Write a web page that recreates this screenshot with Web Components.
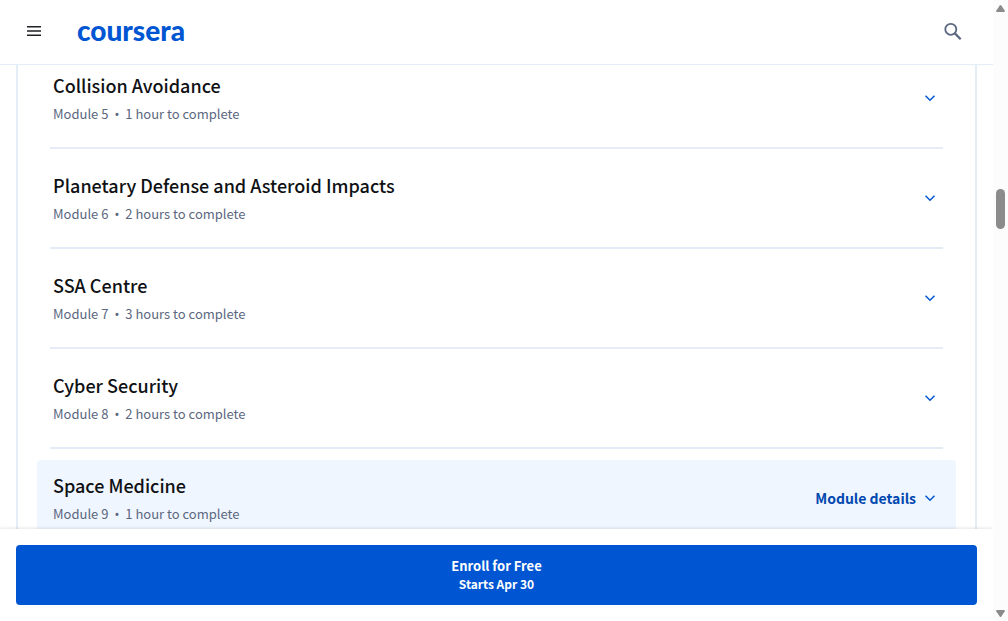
<!DOCTYPE html>
<html lang="en">
<head>
<meta charset="utf-8">
<title>Course modules | Coursera</title>
<style>
  body { margin: 0; background: #fff; color: #0f1114; font-family: "Noto Sans CJK SC", "Noto Sans", sans-serif; }
</style>
</head>
<body>
<course-page>
  <site-header slot="header"></site-header>
  <module-list>
    <module-item number="5" duration="1 hour to complete">Collision Avoidance</module-item>
    <module-item number="6" duration="2 hours to complete">Planetary Defense and Asteroid Impacts</module-item>
    <module-item number="7" duration="3 hours to complete">SSA Centre</module-item>
    <module-item number="8" duration="2 hours to complete">Cyber Security</module-item>
    <module-item number="9" duration="1 hour to complete" active>Space Medicine</module-item>
  </module-list>
  <enroll-bar slot="footer" starts="Starts Apr 30">Enroll for Free</enroll-bar>
  <scroll-rail slot="rail"></scroll-rail>
</course-page>

<script>
class Component extends HTMLElement {
  connectedCallback() {
    if (this.shadowRoot) return;
    this.attachShadow({ mode: "open" }).innerHTML = this.view();
  }
}

customElements.define("course-page", class extends Component {
  view() {
    return `
      <style>
        :host { display: grid; grid-template-columns: minmax(0, 1fr) 15px; height: 100vh; }
        .column { display: flex; flex-direction: column; min-height: 0; }
        main { flex: 1 1 0; min-height: 0; overflow: hidden; padding: 0 16px; }
      </style>
      <div class="column">
        <slot name="header"></slot>
        <main><slot></slot></main>
        <slot name="footer"></slot>
      </div>
      <slot name="rail"></slot>`;
  }
});

customElements.define("site-header", class extends Component {
  view() {
    return `
      <style>
        :host { display: block; border-bottom: 1px solid #e3eefb; background: #fff; }
        header { display: flex; align-items: center; height: 64px; padding: 0 28px 2px 22px; box-sizing: border-box; }
        button { display: flex; align-items: center; justify-content: center; width: 24px; height: 24px; padding: 0; border: 0; background: none; }
        a { margin: 0 auto 0 31px; padding-bottom: 2px; color: #0056d2; font: 900 28px/32px Lato, sans-serif; text-decoration: none; }
      </style>
      <header>
        <button type="button" aria-label="Open menu">
          <svg width="14" height="10" viewBox="0 0 14 10" fill="#1f2024"><path d="M0 0h14v1.4H0zM0 4.2h14v1.5H0zM0 8.6h14V10H0z"/></svg>
        </button>
        <a href="#">coursera</a>
        <button type="button" aria-label="Search">
          <svg width="18" height="18" viewBox="0 0 18 18" fill="none" stroke="#5b6780"><circle cx="6.8" cy="7.3" r="5.5" stroke-width="1.8"/><path d="M10.9 11.4l5.800 5.800" stroke-width="2.2"/></svg>
        </button>
      </header>`;
  }
});

customElements.define("module-list", class extends Component {
  view() {
    return `
      <style>
        :host { display: block; margin-top: -16px; padding: 0 19px; border: solid #e5edf9; border-width: 0 2px; }
      </style>
      <slot></slot>`;
  }
});

customElements.define("module-item", class extends Component {
  view() {
    const details = this.hasAttribute("active") ? `<span class="details">Module details</span>` : "";
    return `
      <style>
        :host { display: block; }
        button { display: flex; align-items: center; gap: 8px; width: 100%; height: 76px; margin: 11px 0; padding: 0 20px 0 16px; border: 0; border-radius: 4px; background: none; color: inherit; font: inherit; text-align: left; }
        :host([active]) button { background: #f0f6ff; }
        .text { display: grid; gap: 6px; margin-right: auto; }
        .title { font-size: 18px; font-weight: 500; line-height: 26px; }
        .meta { display: flex; gap: 6px; color: #5b6780; font-size: 13px; line-height: 20px; }
        .dot { font-family: "Noto Sans", sans-serif; }
        .details { color: #0048b0; font-size: 14px; font-weight: 700; line-height: 20px; }
        hr { margin: 0 13px; border: 0; border-top: 2px solid #e5ebf8; }
        :host(:last-child) hr { display: none; }
      </style>
      <button type="button" aria-expanded="false">
        <span class="text">
          <span class="title"><slot></slot></span>
          <span class="meta"><span>Module ${this.getAttribute("number")}</span><span class="dot">•</span><span>${this.getAttribute("duration")}</span></span>
        </span>
        ${details}
        <svg width="12" height="12" viewBox="0 0 12 12" fill="none" stroke="#0056d2" stroke-width="1.5"><path d="M1.5 3.7L6 8.2l4.500-4.500"/></svg>
      </button>
      <hr>`;
  }
});

customElements.define("enroll-bar", class extends Component {
  view() {
    return `
      <style>
        :host { display: block; position: relative; padding: 16px; background: #fff; box-shadow: 0 0 4px rgba(0, 0, 0, .16); }
        button { display: flex; flex-direction: column; align-items: center; justify-content: center; width: 100%; height: 60px; padding: 0; border: 0; border-radius: 4px; background: #0056d2; color: #fff; font: inherit; font-weight: 700; line-height: 18px; font-size: 13px; }
        .starts { font-size: 12px; }
      </style>
      <button type="button"><span><slot></slot></span><span class="starts">${this.getAttribute("starts")}</span></button>`;
  }
});

customElements.define("scroll-rail", class extends Component {
  view() {
    return `
      <style>
        :host { display: flex; flex-direction: column; align-items: center; position: relative; box-sizing: border-box; padding: 5px 0 4px; background: #fcfcfc; }
        .track { flex: 1; display: flex; flex-direction: column; }
        .before { flex: 176 0 0; }
        .thumb { width: 9px; height: 40px; border-radius: 5px; background: #8b8b8b; }
        .after { flex: 380 0 0; }
      </style>
      <svg width="9" height="7" viewBox="0 0 9 7" fill="#8b8b8b"><path d="M3.700.6Q4.500-.4 5.300.6L8.800 5.800Q9 7 8 7H1Q0 7 .2 5.800z"/></svg>
      <div class="track"><div class="before"></div><div class="thumb"></div><div class="after"></div></div>
      <svg width="9" height="7" viewBox="0 0 9 7" fill="#8b8b8b"><path d="M3.700 6.400Q4.500 7.400 5.300 6.400L8.800 1.200Q9 0 8 0H1Q0 0 .2 1.200z"/></svg>`;
  }
});
</script>
</body>
</html>
